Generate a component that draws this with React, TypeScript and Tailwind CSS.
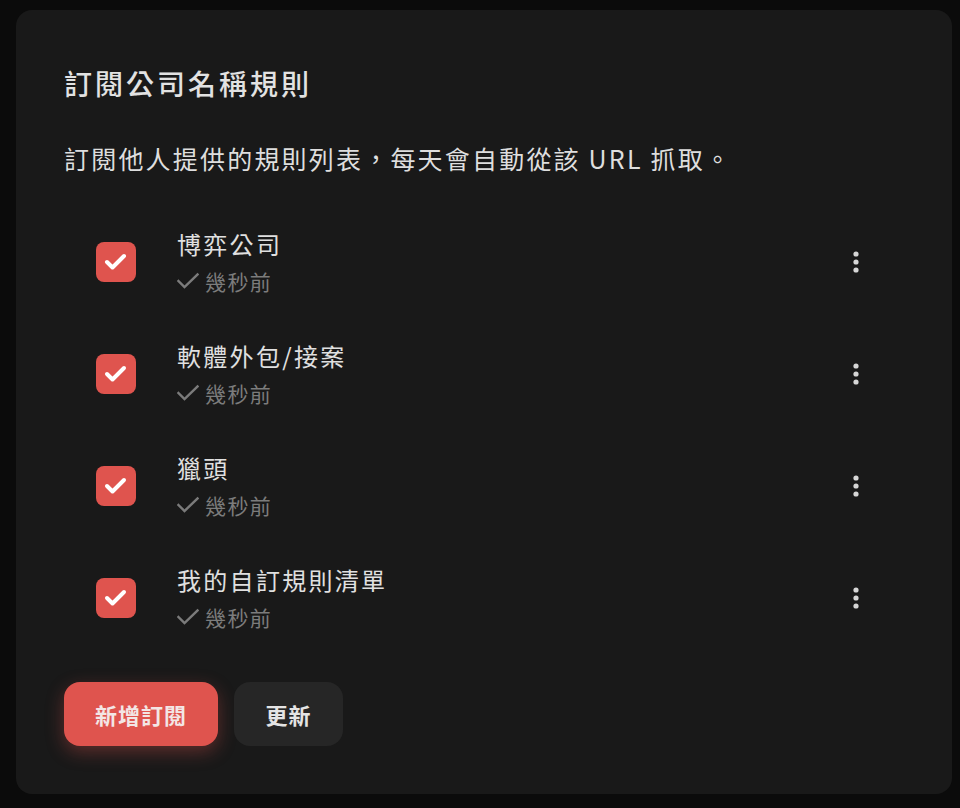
import React from "react";

const items = ["博弈公司", "軟體外包/接案", "獵頭", "我的自訂規則清單"];

function CheckBox() {
  return (
    <div className="w-10 h-10 rounded-lg bg-[#df544e] flex items-center justify-center shrink-0">
      <svg width="40" height="40" viewBox="0 0 40 40">
        <polyline points="11,20 16.5,25.5 28,14" fill="none" stroke="#ffffff" strokeWidth="4" strokeLinecap="round" strokeLinejoin="round" />
      </svg>
    </div>
  );
}

function Kebab() {
  return (
    <svg width="24" height="28" viewBox="0 0 24 28">
      <circle cx="12" cy="6" r="2.6" fill="#d6d6d6" />
      <circle cx="12" cy="14" r="2.6" fill="#d6d6d6" />
      <circle cx="12" cy="22" r="2.6" fill="#d6d6d6" />
    </svg>
  );
}

function SmallCheck() {
  return (
    <svg width="22" height="22" viewBox="0 0 22 22" className="shrink-0">
      <polyline points="1.5,11 7.5,17 20.5,4.5" fill="none" stroke="#7b7b7b" strokeWidth="2.4" strokeLinecap="square" />
    </svg>
  );
}

export default function App() {
  return (
    <div
      className="w-[960px] h-[808px] bg-[#0b0b0b] pt-[10px] pl-[16px] pr-[8px] pb-[14px]"
      style={{ fontFamily: '"Noto Sans CJK TC", "Noto Sans", sans-serif' }}
    >
      <div className="h-full rounded-2xl bg-[#191919] pt-[53px] pl-[48px] pr-[48px] pb-[48px] flex flex-col">
        <h1 className="text-[28px] leading-[40px] tracking-[3px] text-[#e2e2e2] font-medium">訂閱公司名稱規則</h1>
        <p className="mt-[37px] text-[25px] leading-[36px] tracking-[2.2px] text-[#dedede]">
          訂閱他人提供的規則列表，每天會自動從該 URL 抓取。
        </p>
        <div className="mt-[30px] flex flex-col">
          {items.map((name) => (
            <div key={name} className="h-[112px] flex items-center pl-[32px] pr-[36px]">
              <CheckBox />
              <div className="ml-[41px] flex-1 flex flex-col">
                <div className="text-[24px] leading-[30px] tracking-[2.3px] text-[#e0e0e0]">{name}</div>
                <div className="mt-[8px] flex items-center gap-[6px] text-[21px] leading-[28px] tracking-[1.4px] text-[#7c7c7c]">
                  <SmallCheck />
                  <span>幾秒前</span>
                </div>
              </div>
              <Kebab />
            </div>
          ))}
        </div>
        <div className="mt-[28px] flex gap-[16px]">
          <button className="h-16 w-[154px] rounded-2xl bg-[#df544e] text-[22px] font-bold tracking-[1px] text-[#f3e6e5] shadow-[0_6px_18px_rgba(223,84,78,0.35)]">
            新增訂閱
          </button>
          <button className="h-16 w-[109px] rounded-2xl bg-[#262626] text-[22px] font-bold tracking-[1px] text-[#e4e4e4]">
            更新
          </button>
        </div>
      </div>
    </div>
  );
}
